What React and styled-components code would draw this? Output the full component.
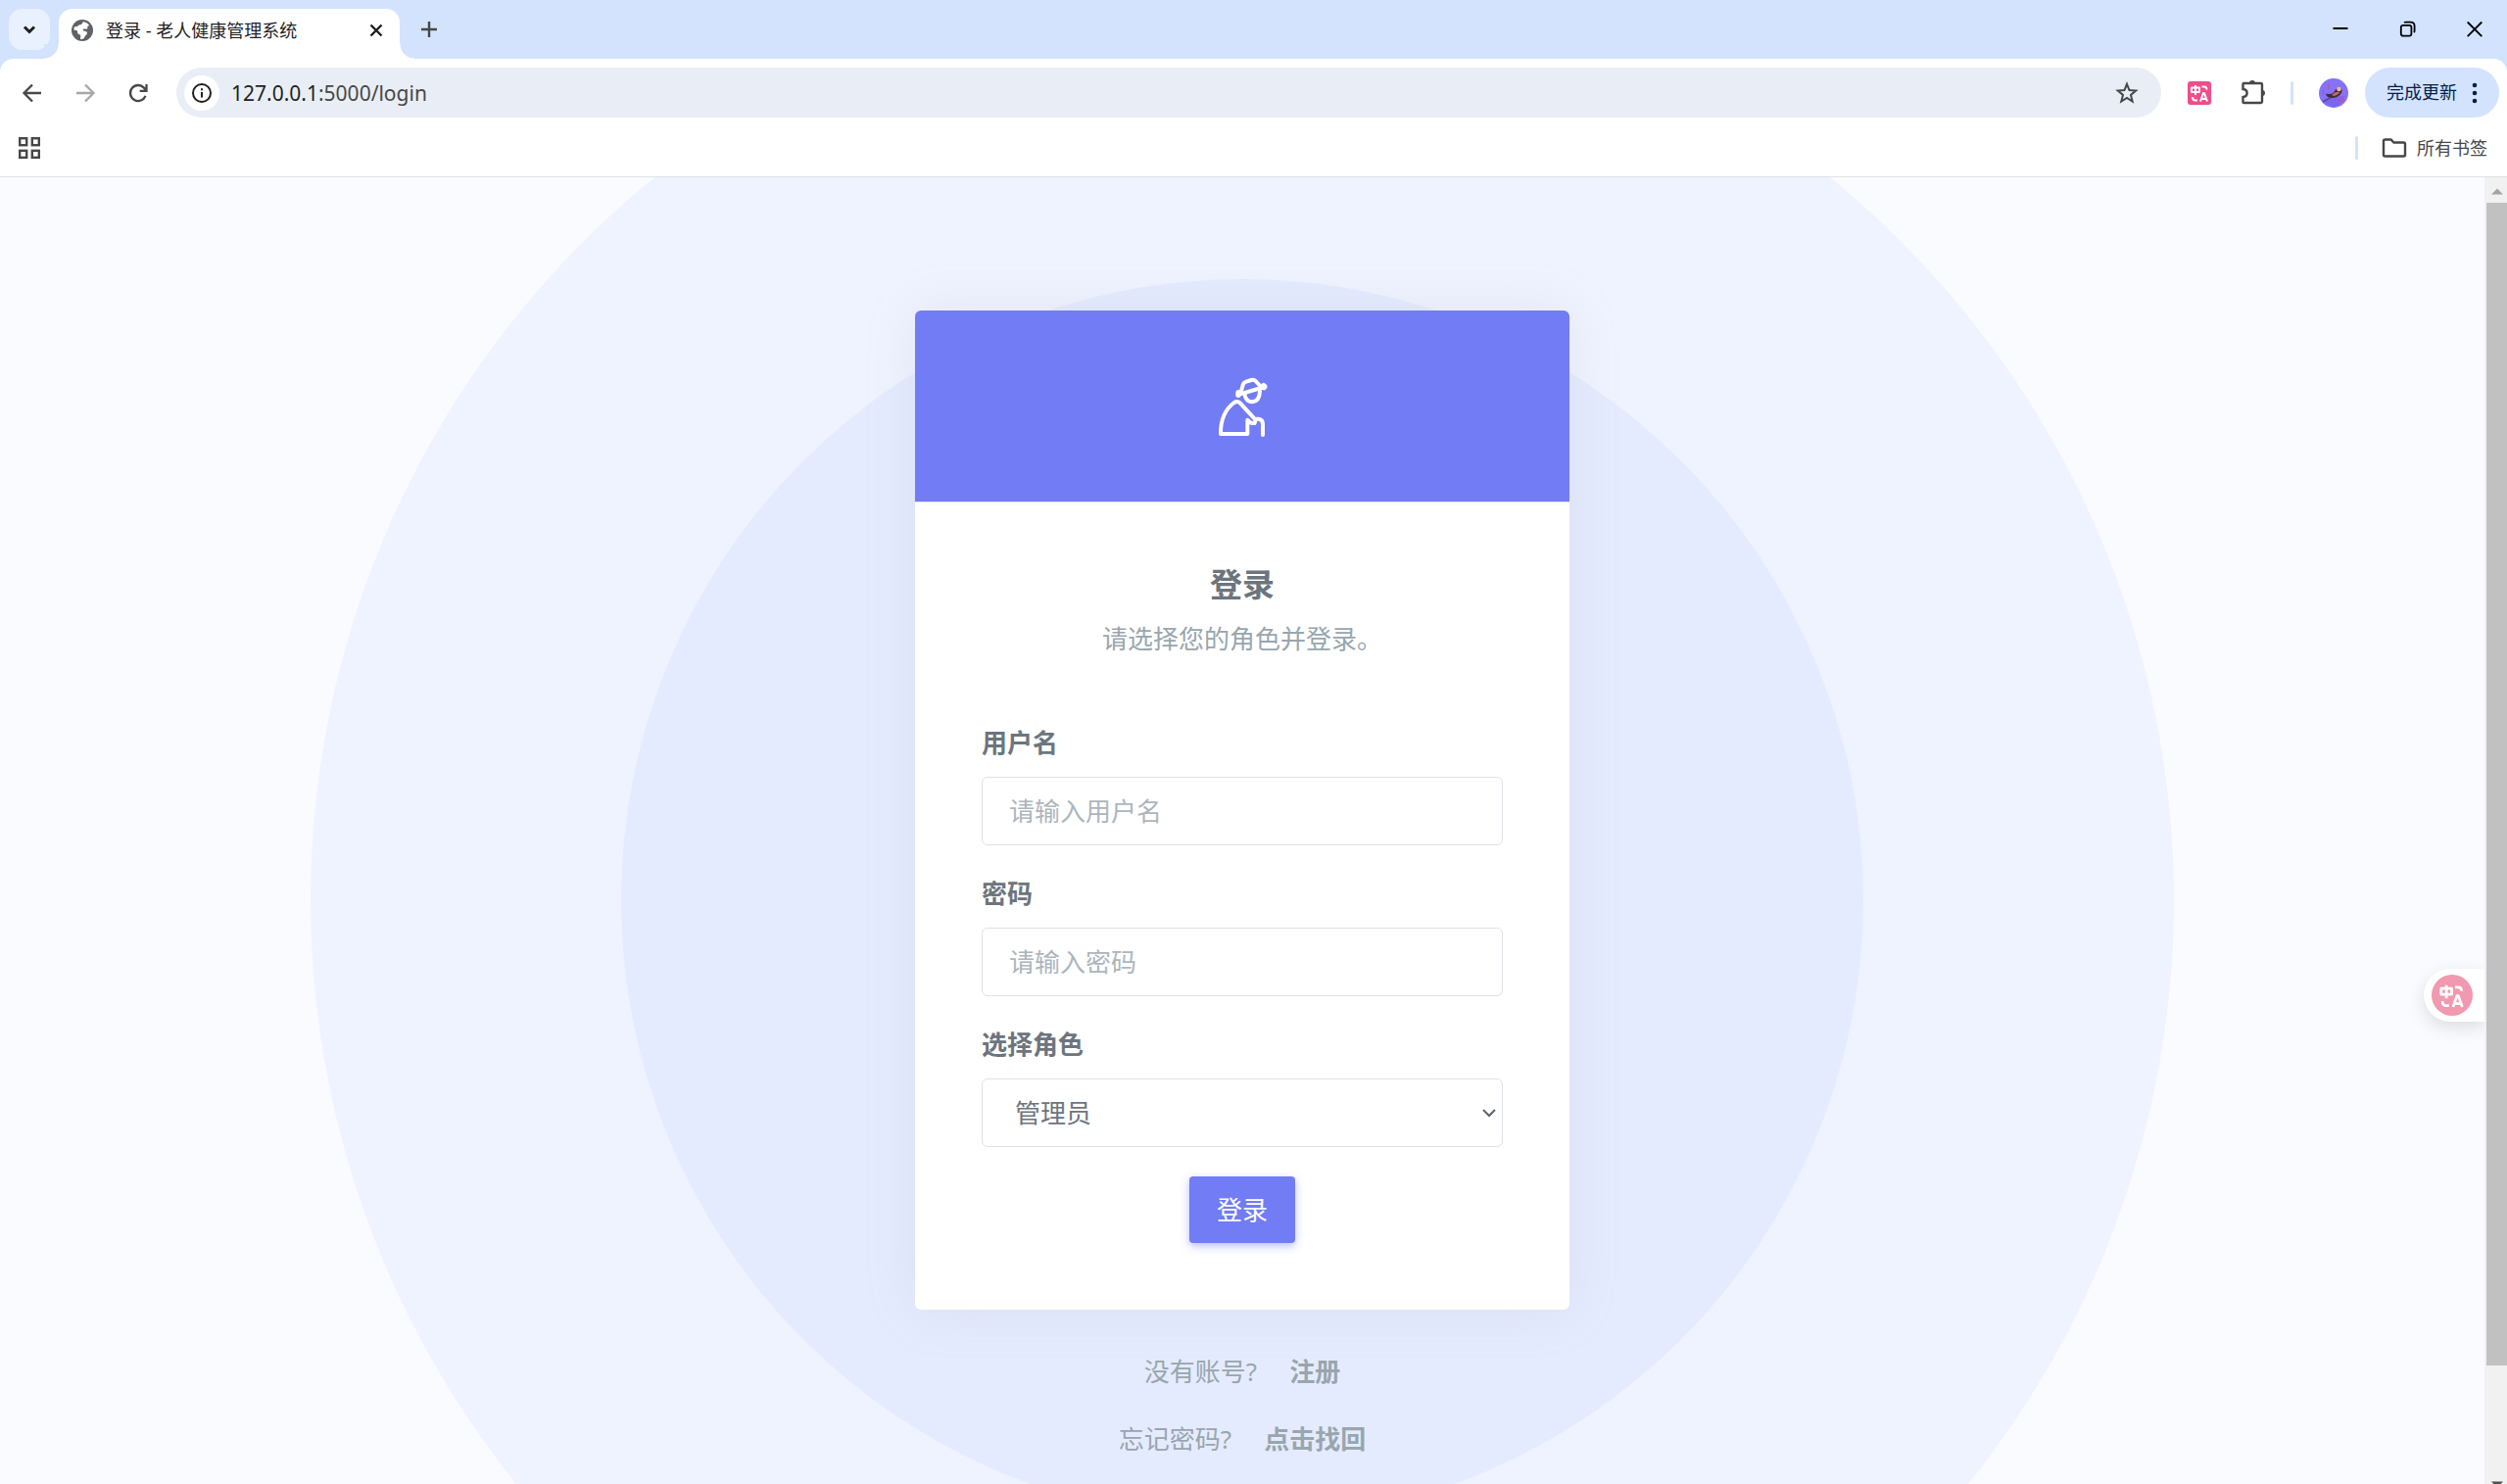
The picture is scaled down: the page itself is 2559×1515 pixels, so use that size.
import React from "react";
import styled, { createGlobalStyle } from "styled-components";

function App() {
  return (
    <>
      <GlobalStyle />
      <Window>
        <TabStrip>
          <TabSearch aria-label="搜索标签页">
            <Icon $size={20} viewBox="0 0 20 20" $stroke={3}>
              <path d="M5 7.5l5 5 5-5" />
            </Icon>
          </TabSearch>
          <Tab>
            <GlobeIcon />
            <TabTitle>登录 - 老人健康管理系统</TabTitle>
            <IconButton $size={24} aria-label="关闭标签页">
              <Icon $size={24} viewBox="0 0 24 24" $stroke={2.4}>
                <path d="M6.5 6.5l11 11M17.5 6.5l-11 11" />
              </Icon>
            </IconButton>
          </Tab>
          <NewTab $size={36} aria-label="新标签页">
            <Icon $size={24} viewBox="0 0 24 24" $stroke={2.4} $color="#474747">
              <path d="M12 4v16M4 12h16" />
            </Icon>
          </NewTab>
          <WindowButtons>
            <WindowButton aria-label="最小化">
              <Icon $size={20} viewBox="0 0 20 20" $stroke={2} $color="#000">
                <path d="M2.5 9h15" />
              </Icon>
            </WindowButton>
            <WindowButton aria-label="还原">
              <Icon $size={20} viewBox="0 0 20 20" $stroke={1.8} $color="#000">
                <rect x="2.8" y="5.8" width="10.6" height="10.8" rx="2" />
                <path d="M6 3.2q.6-.6 2-.6h4.6q4 0 4 4v4.6q0 1.4-.6 2" />
              </Icon>
            </WindowButton>
            <WindowButton aria-label="关闭">
              <Icon $size={20} viewBox="0 0 20 20" $stroke={1.8} $color="#000">
                <path d="M2.7 2.5l14.6 14.6M17.3 2.5L2.7 17.1" />
              </Icon>
            </WindowButton>
          </WindowButtons>
        </TabStrip>

        <Toolbar>
          <NavButtons>
            <IconButton $size={36} aria-label="后退">
              <Icon $size={24} viewBox="0 0 24 24" $stroke={2.3} $color="#474747">
                <path d="M21 12H4M12 3.5L3.5 12l8.500 8.500" />
              </Icon>
            </IconButton>
            <IconButton $size={36} aria-label="前进">
              <Icon $size={24} viewBox="0 0 24 24" $stroke={2.3} $color="#a8a8a8">
                <path d="M3 12h17M12 3.5l8.500 8.500-8.500 8.500" />
              </Icon>
            </IconButton>
            <IconButton $size={36} aria-label="重新加载">
              <Icon $size={24} viewBox="0 0 24 24" $stroke={2.3} $color="#474747">
                <path d="M19.5 14.8a8 8 0 1 1-1.600-8.200l2.400 2.600M20.500 3v6.800h-6.800" />
              </Icon>
            </IconButton>
          </NavButtons>
          <AddressBar>
            <SiteInfo aria-label="查看网站信息">
              <Icon $size={24} viewBox="0 0 24 24" $stroke={2}>
                <circle cx="12" cy="12" r="9" />
                <path d="M12 11v5.5M12 7.2v2" />
              </Icon>
            </SiteInfo>
            <Url>
              127.0.0.1<span>:5000/login</span>
            </Url>
            <IconButton $size={36} aria-label="为此标签页添加书签">
              <Icon $size={24} viewBox="0 0 24 24" $stroke={2} $color="#474747">
                <path d="M12 2.8l2.500 6.300 6.700.5-5.200 4.300 1.700 6.600L12 16.900l-5.700 3.600L8 13.900 2.800 9.600l6.700-.5z" />
              </Icon>
            </IconButton>
          </AddressBar>
          <Extensions>
            <IconButton $size={26} aria-label="翻译扩展">
              <TranslateBadge />
            </IconButton>
            <IconButton $size={28} aria-label="扩展程序">
              <Icon $size={28} viewBox="-2 1 28 28" $stroke={2.4} $color="#474747">
                <path d="M4.500 5h17a1.500 1.500 0 0 1 1.500 1.500v17a1.500 1.500 0 0 1-1.500 1.500h-17a1 1 0 0 1-1-1v-5c5.500-.5 5.500-7.500 0-8V6a1 1 0 0 1 1-1z" />
                <path
                  fill="#474747"
                  stroke="none"
                  d="M10 5a3 3 0 0 1 6 0zM23 12a3 3 0 0 1 0 6z"
                />
              </Icon>
            </IconButton>
            <Divider />
            <IconButton $size={30} aria-label="个人资料">
              <Avatar />
            </IconButton>
          </Extensions>
          <UpdateButton>
            完成更新
            <svg width="6" height="24" viewBox="0 0 6 24" fill="#041e49">
              <circle cx="3" cy="4" r="2.300" />
              <circle cx="3" cy="12" r="2.300" />
              <circle cx="3" cy="20" r="2.300" />
            </svg>
          </UpdateButton>
        </Toolbar>

        <BookmarkBar>
          <IconButton $size={24} aria-label="应用">
            <Icon $size={24} viewBox="0 0 24 24" $stroke={2.4} $color="#474747">
              <rect x="2.2" y="2.2" width="7" height="7" />
              <rect x="14.8" y="2.2" width="7" height="7" />
              <rect x="2.2" y="14.8" width="7" height="7" />
              <rect x="14.8" y="14.8" width="7" height="7" />
            </Icon>
          </IconButton>
          <AllBookmarks>
            <Divider />
            <BookmarkFolder>
              <Icon $size={26} viewBox="0 0 26 26" $stroke={2.4} $color="#474747">
                <path d="M3.500 4.500h6l3 3h10a1.500 1.500 0 0 1 1.500 1.500v11a1.500 1.500 0 0 1-1.500 1.500h-19A1.500 1.500 0 0 1 2 20V6a1.500 1.500 0 0 1 1.500-1.500z" />
              </Icon>
              所有书签
            </BookmarkFolder>
          </AllBookmarks>
        </BookmarkBar>

        <Viewport>
          <Page>
            <Ring $width={75} $color="#eff3ff" />
            <Ring $width={50} $color="#e5ebff" />
            <Content>
              <Card>
                <CardHeader>
                  <ElderIcon />
                </CardHeader>
                <CardBody>
                  <Title>登录</Title>
                  <Subtitle>请选择您的角色并登录。</Subtitle>
                  <Form onSubmit={(e) => e.preventDefault()}>
                    <Field>
                      <Label htmlFor="username">用户名</Label>
                      <Input id="username" type="text" placeholder="请输入用户名" />
                    </Field>
                    <Field>
                      <Label htmlFor="password">密码</Label>
                      <Input id="password" type="password" placeholder="请输入密码" />
                    </Field>
                    <Field>
                      <Label htmlFor="role">选择角色</Label>
                      <SelectBox>
                        <Select id="role" defaultValue="admin">
                          <option value="admin">管理员</option>
                        </Select>
                        <Caret width="16" height="16" viewBox="0 0 16 16">
                          <path d="M2 5l6 6 6-6" />
                        </Caret>
                      </SelectBox>
                    </Field>
                    <SubmitButton type="submit">登录</SubmitButton>
                  </Form>
                </CardBody>
              </Card>
              <Links>
                <p>
                  没有账号?<a href="#register">注册</a>
                </p>
                <p>
                  忘记密码?<a href="#reset">点击找回</a>
                </p>
              </Links>
            </Content>
            <FloatingTranslate aria-label="翻译此页">
              <TranslateRound />
            </FloatingTranslate>
          </Page>
          <Scrollbar>
            <ScrollArrow viewBox="0 0 21 25">
              <path d="M5 17l6-6 6 6z" fill="#a3a3a3" />
            </ScrollArrow>
            <ScrollThumb />
            <ScrollArrow viewBox="0 0 21 25">
              <path d="M5 23h12l-6 6z" fill="#505050" />
            </ScrollArrow>
          </Scrollbar>
        </Viewport>
      </Window>
    </>
  );
}

export default App;

function GlobeIcon() {
  return (
    <svg width="24" height="24" viewBox="0 0 24 24">
      <circle cx="12" cy="12" r="11" fill="#5f6368" />
      <path
        fill="#fff"
        d="M13 3.200c2.700.3 5 1.700 6.400 4-1.500-.2-2.500.5-2 1.800.3 1.500-1 2-2.300 1.600-1.300-.3-2.600-.2-2.400 1.100.4 1.200 2.800.8 3.800 1.800 1 1.200.3 2.700-.9 3.400-1.200.6-1 2.300-2.200 3.300-.9.8-2.300.8-3.400.5-.2-1.200.6-2 .3-3.200-.5-1.500-2.700-1.200-3.200-2.700-.4-1.300.6-1.900-.6-2.600-1-.5-2.200-.4-3.200-.8C3.500 10 3.800 9 4.300 8c1.400.8 2.700.2 3.600-.9 1-1.300 2.800-.5 3.700-1.600.5-.8.400-1.800 1.400-2.300z"
      />
    </svg>
  );
}

function TranslateGlyph() {
  return (
    <g fill="none" stroke="#fff" strokeWidth="2" strokeLinejoin="round">
      <path d="M5 7.500h8v4.500H5zM9 5v10" />
      <path d="M15.500 6.500h2.500q2.500 0 2.500 3M6 17q0 3.500 3 3.500h2" />
      <path d="M14 21.500l3-8.500h1l3 8.500M15 19h5" />
    </g>
  );
}

function TranslateBadge() {
  return (
    <svg width="26" height="26" viewBox="0 0 26 26">
      <rect x="1" y="1" width="24" height="24" rx="3" fill="#ef4d8b" />
      <TranslateGlyph />
    </svg>
  );
}

function TranslateRound() {
  return (
    <svg width="42" height="42" viewBox="0 0 42 42">
      <circle cx="21" cy="21" r="21" fill="#f099b1" />
      <g transform="translate(3 4) scale(1.35)">
        <TranslateGlyph />
      </g>
    </svg>
  );
}

function Avatar() {
  return (
    <svg width="30" height="30" viewBox="0 0 30 30">
      <circle cx="15" cy="15" r="15" fill="#8672f5" />
      <path d="M3 22q10-3 24-4l-4 7q-4 5-10 4z" fill="#7867ef" />
      <path d="M4 24l9-5" stroke="#5a4a9c" strokeWidth="1.500" />
      <path
        d="M10 5v6M4.500 12v5M23 18v7M21 21v3M25 20v4"
        stroke="#c0509f"
        strokeWidth="1.200"
      />
      <path d="M7 15.500q5 1.500 8-1 2-4 5-5 4 0 3.500 4-2 5.500-9 6.500-7 0-7.500-4.500z" fill="#4a2a30" />
      <path d="M13 17q4-4 8-3-1 3-6 4z" fill="#b86f68" />
      <circle cx="20.500" cy="11" r="2.300" fill="#e8b9a8" />
    </svg>
  );
}

function ElderIcon() {
  return (
    <svg
      width="60"
      height="66"
      viewBox="174 94 180 198"
      fill="none"
      stroke="#fff"
      strokeWidth="12"
      strokeLinecap="round"
      strokeLinejoin="round"
    >
      <path d="M261 145L267 124Q270 119 276 117L292 112Q300 110 305 115L320 131" />
      <path d="M251 157L332 133" />
      <path d="M252 150v8M330 129q5 3 1 6" strokeWidth="16" />
      <path d="M271 156Q276 179 295 179Q317 176 318 146" />
      <path d="M303 232L258 183Q249 174 239 181Q197 213 198 277H280V234L292 244H302L305 232Q327 228 327 248V280" />
    </svg>
  );
}

const GlobalStyle = createGlobalStyle`
  * {
    box-sizing: border-box;
  }

  body {
    margin: 0;
    font-family: "Noto Sans", "Noto Sans CJK SC", sans-serif;
    font-size: 26px;
    line-height: 39px;
    color: #6c757d;
  }

  button,
  input,
  select {
    font: inherit;
  }

  button {
    padding: 0;
    border: 0;
    background: none;
    cursor: pointer;
  }

  p {
    margin: 0;
  }
`;

const Window = styled.div`
  display: flex;
  flex-direction: column;
  height: 100vh;
  overflow: hidden;
  background: #d3e3fd;
`;

const Icon = styled.svg`
  display: block;
  width: ${(props) => props.$size}px;
  height: ${(props) => props.$size}px;
  fill: none;
  stroke: ${(props) => props.$color || "#1f1f1f"};
  stroke-width: ${(props) => props.$stroke};
  overflow: visible;
`;

const IconButton = styled.button`
  display: flex;
  flex: none;
  align-items: center;
  justify-content: center;
  width: ${(props) => props.$size}px;
  height: ${(props) => props.$size}px;
`;

const TabStrip = styled.div`
  display: flex;
  flex: none;
  align-items: flex-start;
  height: 60px;
  padding: 9px 0 0 9px;
`;

const TabSearch = styled.button`
  display: flex;
  align-items: center;
  justify-content: center;
  width: 42px;
  height: 42px;
  border-radius: 14px;
  background: #e9f1ff;
`;

const Tab = styled.div`
  position: relative;
  display: flex;
  align-items: center;
  width: 348px;
  height: 51px;
  margin-left: 9px;
  padding: 0 12px 7px;
  border-radius: 14px 14px 0 0;
  background: #fff;

  /* curved feet of the active tab */
  &::before,
  &::after {
    content: "";
    position: absolute;
    bottom: 0;
    width: 15px;
    height: 15px;
  }

  &::before {
    right: 100%;
    background: radial-gradient(circle at 0 0, #d3e3fd 14px, #fff 15px);
  }

  &::after {
    left: 100%;
    background: radial-gradient(circle at 100% 0, #d3e3fd 14px, #fff 15px);
  }
`;

const TabTitle = styled.span`
  flex: 1;
  padding-left: 12px;
  font-size: 18px;
  line-height: 24px;
  color: #1f1f1f;
  white-space: nowrap;
`;

const NewTab = styled(IconButton)`
  margin: 3px 0 0 12px;
`;

const WindowButtons = styled.div`
  display: flex;
  margin-left: auto;
`;

const WindowButton = styled.button`
  display: flex;
  align-items: center;
  justify-content: center;
  width: 69px;
  height: 42px;

  &:last-child {
    width: 67px;
  }
`;

const Toolbar = styled.div`
  display: flex;
  flex: none;
  align-items: center;
  height: 69px;
  padding-right: 8px;
  border-radius: 14px 14px 0 0;
  background: #fff;
`;

const NavButtons = styled.div`
  display: flex;
  gap: 18px;
  padding: 0 21px 0 15px;
`;

const AddressBar = styled.div`
  display: flex;
  flex: 1;
  align-items: center;
  height: 51px;
  padding: 0 17px 0 8px;
  border-radius: 26px;
  background: #e9eef6;
`;

const SiteInfo = styled.button`
  display: flex;
  align-items: center;
  justify-content: center;
  width: 36px;
  height: 36px;
  border-radius: 50%;
  background: #fff;
`;

const Url = styled.div`
  flex: 1;
  padding-left: 12px;
  font-size: 21px;
  line-height: 30px;
  color: #1f1f1f;

  span {
    color: #474747;
  }
`;

const Extensions = styled.div`
  display: flex;
  align-items: center;
  gap: 26px;
  padding: 0 17px 0 26px;
`;

const Divider = styled.span`
  width: 3px;
  height: 24px;
  border-radius: 2px;
  background: #d3e3fd;
`;

const UpdateButton = styled.button`
  display: flex;
  align-items: center;
  justify-content: space-between;
  width: 137px;
  height: 51px;
  padding: 0 22px;
  border-radius: 26px;
  background: #d3e3fd;
  font-size: 18px;
  color: #041e49;
  white-space: nowrap;
`;

const BookmarkBar = styled.div`
  display: flex;
  flex: none;
  align-items: center;
  justify-content: space-between;
  height: 52px;
  padding: 0 20px 8px 18px;
  border-bottom: 1px solid #dfe1e5;
  background: #fff;
`;

const AllBookmarks = styled.div`
  display: flex;
  align-items: center;
  gap: 24px;
`;

const BookmarkFolder = styled.button`
  display: flex;
  align-items: center;
  gap: 10px;
  font-size: 18px;
  line-height: 24px;
  color: #474747;
`;

const Viewport = styled.div`
  display: flex;
  flex: 1;
  min-height: 0;
`;

const Page = styled.main`
  position: relative;
  flex: 1;
  overflow: hidden;
  background: #fafbff;
`;

const Ring = styled.div`
  position: absolute;
  top: 738px;
  left: 50%;
  width: ${(props) => props.$width}%;
  aspect-ratio: 1;
  border-radius: 50%;
  background: ${(props) => props.$color};
  transform: translate(-50%, -50%);
`;

const Content = styled.div`
  position: relative;
  width: 668px;
  max-width: 100%;
  margin: 0 auto;
  padding-top: 136px;
`;

const Card = styled.section`
  overflow: hidden;
  border-radius: 6px;
  background: #fff;
  box-shadow: 0 0 53px rgba(154, 161, 171, 0.15);
`;

const CardHeader = styled.header`
  display: flex;
  align-items: center;
  justify-content: center;
  height: 196px;
  border-bottom: 1px solid #dee2e6;
  background: #727cf5;
`;

const CardBody = styled.div`
  padding: 60px 68px 68px;
  text-align: center;
`;

const Title = styled.h1`
  margin: 0 0 12px;
  font-size: 33px;
  line-height: 48px;
  font-weight: 700;
`;

const Subtitle = styled.p`
  margin-bottom: 67px;
  color: #98a6ad;
`;

const Form = styled.form`
  display: flex;
  flex-direction: column;
  align-items: center;
`;

const Field = styled.div`
  display: flex;
  flex-direction: column;
  gap: 15px;
  width: 100%;
  margin-bottom: 30px;
`;

const Label = styled.label`
  font-weight: 700;
  text-align: left;
`;

const Input = styled.input`
  width: 100%;
  height: 70px;
  padding: 0 27px;
  border: 1px solid #dee2e6;
  border-radius: 6px;
  background: #fff;
  color: #6c757d;

  &::placeholder {
    color: #adb5bd;
    opacity: 1;
  }
`;

const SelectBox = styled.div`
  position: relative;
`;

const Select = styled.select`
  display: block;
  width: 100%;
  height: 70px;
  padding: 0 33px;
  border: 1px solid #dee2e6;
  border-radius: 6px;
  background: #fff;
  color: #6c757d;
  appearance: none;
`;

const Caret = styled.svg`
  position: absolute;
  top: 27px;
  right: 6px;
  fill: none;
  stroke: #5c656d;
  stroke-width: 2;
  pointer-events: none;
`;

const SubmitButton = styled.button`
  width: 108px;
  height: 68px;
  border-radius: 4px;
  background: #727cf5;
  color: #fff;
  box-shadow: 0 3px 9px rgba(114, 124, 245, 0.5);
`;

const Links = styled.footer`
  display: flex;
  flex-direction: column;
  gap: 30px;
  padding-top: 44px;
  text-align: center;
  color: #98a6ad;

  a {
    margin-left: 33px;
    font-weight: 700;
    color: inherit;
    text-decoration: none;
  }
`;

const FloatingTranslate = styled.button`
  position: absolute;
  top: 808px;
  right: 0;
  display: flex;
  align-items: center;
  width: 62px;
  height: 54px;
  padding-left: 8px;
  border-radius: 27px 0 0 27px;
  background: #fff;
  box-shadow: 0 6px 18px rgba(0, 0, 0, 0.12);
`;

const Scrollbar = styled.div`
  display: flex;
  flex: none;
  flex-direction: column;
  width: 23px;
  padding-left: 2px;
  background: #f1f1f1;
`;

const ScrollArrow = styled.svg`
  flex: none;
  width: 21px;
  height: 26px;
  overflow: visible;

  &:last-child {
    margin-top: auto;
  }
`;

const ScrollThumb = styled.div`
  flex: 0 0 89%;
  background: #c1c1c1;
`;
